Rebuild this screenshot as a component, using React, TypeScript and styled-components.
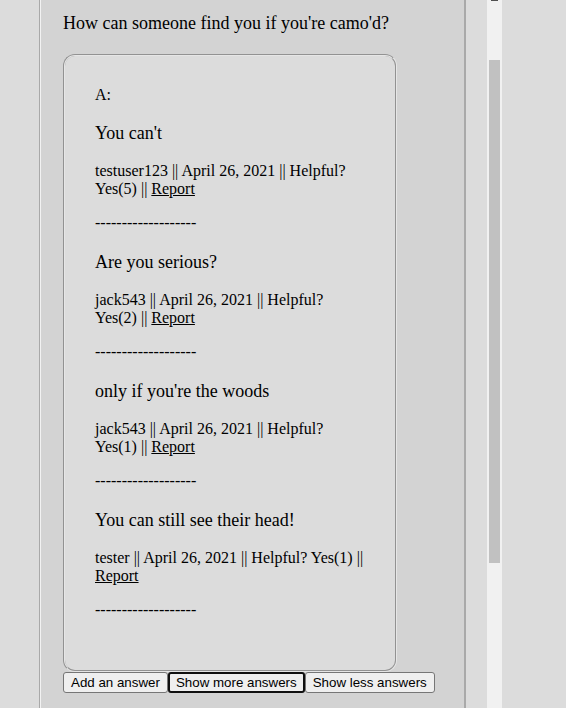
import React from 'react'
import { styled, createGlobalStyle } from 'styled-components'

const GlobalStyle = createGlobalStyle`
  html, body {
    margin: 0;
    padding: 0;
    background: #dcdcdc;
    height: 708px;
    overflow: hidden;
  }
`

const Page = styled.div`
  display: flex;
  height: 708px;
  padding-left: 39px;
  font-family: 'Liberation Serif', 'Times New Roman', serif;
  color: #000;
`

const Panel = styled.section`
  width: 401px;
  height: 708px;
  padding: 13px 0 0 23px;
  background: #d3d3d3;
  border-left: 1px solid #a9a9a9;
  border-right: 2px solid #a9a9a9;
  box-shadow: inset 1px 0 0 #f2f2f2;
`

const Question = styled.p`
  margin: 0 0 20px;
  font-size: 18px;
  line-height: 21px;
`

const AnswerBox = styled.div`
  width: 270px;
  padding: 14px 30px 31px;
  border: 2px groove #e6e6e6;
  border-radius: 12px;
  background: #dcdcdc;

  p {
    margin: 16px 0;
    font-size: 16px;
  }
`

const Label = styled.p``

const AnswerText = styled.p`
  && {
    font-size: 18px;
    margin: 19px 0 18px;
  }
`

const Meta = styled.p``

const ReportLink = styled.a`
  color: inherit;
  text-decoration: underline;
  cursor: pointer;
`

const Divider = styled.p`
  && {
    margin-bottom: 20px;
  }
`

const Buttons = styled.div`
  display: flex;
`

const Button = styled.button<{ $focused?: boolean }>`
  height: 21px;
  padding: 0 ${(p) => (p.$focused ? 6 : 7)}px;
  font-family: 'Liberation Sans', Arial, sans-serif;
  font-size: 13.333px;
  color: #000;
  background: #efefef;
  border: ${(p) => (p.$focused ? '2px solid #101010' : '1px solid #767676')};
  border-radius: 3px;
`

const Scrollbar = styled.div`
  display: flex;
  flex-direction: column;
  align-items: center;
  width: 15px;
  height: 708px;
  margin-left: 21px;
  background: #f1f1f1;
`

const ArrowTip = styled.div`
  width: 7px;
  height: 1px;
  background: #505050;
`

const Thumb = styled.div`
  width: 11px;
  height: 503px;
  margin-top: 59px;
  background: #c1c1c1;
`

const answers = [
  { text: "You can't", user: 'testuser123', yes: 5 },
  { text: 'Are you serious?', user: 'jack543', yes: 2 },
  { text: "only if you're the woods", user: 'jack543', yes: 1 },
  { text: 'You can still see their head!', user: 'tester', yes: 1 },
]

const App = () => {
  return (
    <>
      <GlobalStyle />
      <Page>
        <Panel>
          <Question>How can someone find you if you're camo'd?</Question>
          <AnswerBox>
            <Label>A:</Label>
            {answers.map((a, i) => (
              <React.Fragment key={i}>
                <AnswerText>{a.text}</AnswerText>
                <Meta>
                  {a.user} || April 26, 2021 || Helpful? Yes({a.yes}) ||{' '}
                  <ReportLink>Report</ReportLink>
                </Meta>
                <Divider>-------------------</Divider>
              </React.Fragment>
            ))}
          </AnswerBox>
          <Buttons>
            <Button>Add an answer</Button>
            <Button $focused>Show more answers</Button>
            <Button>Show less answers</Button>
          </Buttons>
        </Panel>
        <Scrollbar>
          <ArrowTip />
          <Thumb />
        </Scrollbar>
      </Page>
    </>
  )
}

export default App
